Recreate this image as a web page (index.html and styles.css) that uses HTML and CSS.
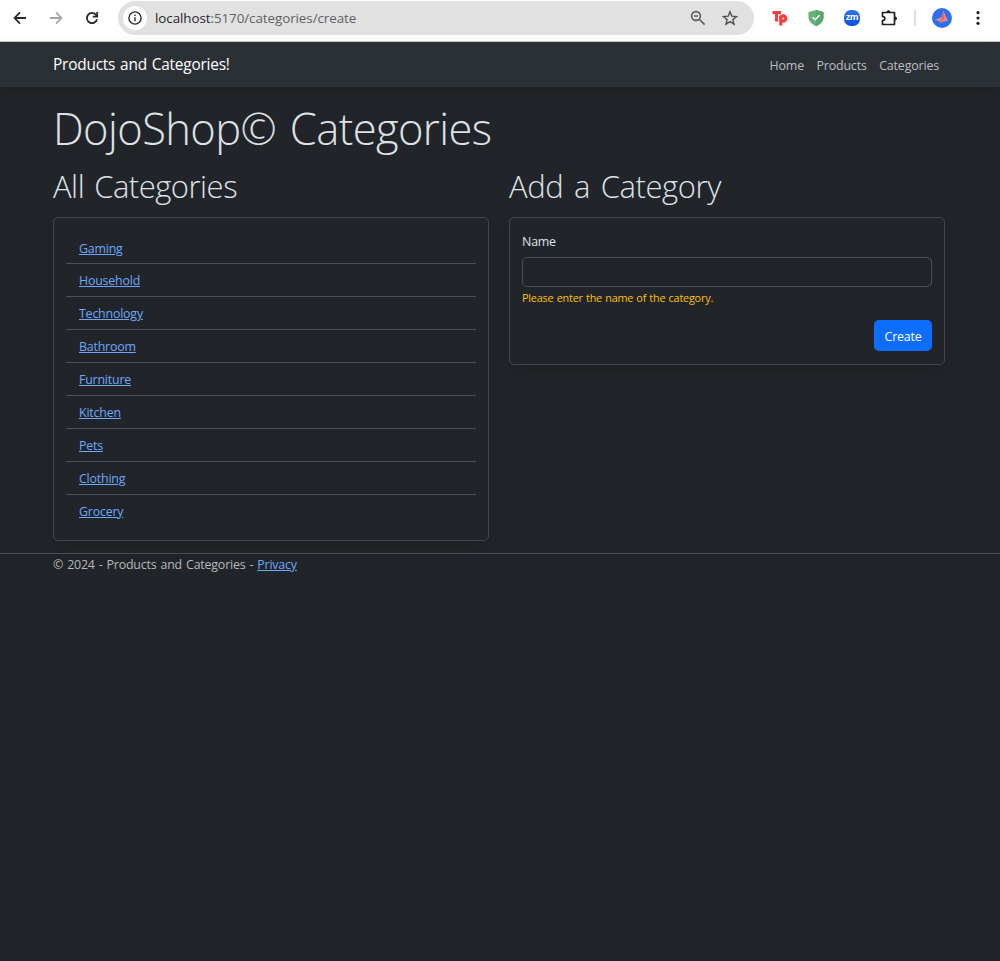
FILE: index.html
```html
<!DOCTYPE html>
<html lang="en">
<head>
<meta charset="utf-8">
<title>Products and Categories</title>
<link rel="stylesheet" href="styles.css">
</head>
<body>
<div class="toolbar">
  <svg class="ico back" width="16" height="16" viewBox="0 0 16 16" fill="none" stroke="#28292c" stroke-width="1.8"><path d="M14 8H3M8 2.4 2.6 8 8 13.6"/></svg>
  <svg class="ico forward" width="16" height="16" viewBox="0 0 16 16" fill="none" stroke="#a5a5a6" stroke-width="1.8"><path d="M2 8h11M8 2.4 13.4 8 8 13.6"/></svg>
  <svg class="ico reload" width="16" height="16" viewBox="0 0 16 16" fill="none" stroke="#28292c" stroke-width="1.8"><path d="M13 9.2A5.1 5.1 0 1 1 12 4.8L13.2 6.2"/><path d="M13.2 2v4.6H8.8"/></svg>
  <div class="address">
    <span class="info"><svg width="16" height="16" viewBox="0 0 16 16" fill="none" stroke="#2b2c2f" stroke-width="1.4"><circle cx="8" cy="8" r="6.1"/><path d="M8 7.2v4M8 4.6v1.5"/></svg></span>
    <span class="url"><span class="host">localhost</span>:5170/categories/create</span>
    <svg class="magnify" width="16" height="16" viewBox="0 0 16 16" fill="none" stroke="#5c5d60" stroke-width="1.6"><circle cx="6" cy="6" r="4.4"/><path d="M9.3 9.3 14.6 14.6M4 6h4"/></svg>
    <svg class="star" width="16" height="16" viewBox="0 0 16 16" fill="none" stroke="#505154" stroke-width="1.4"><path d="m8 1.8 1.8 4.3 4.7.4-3.6 3.1 1.1 4.6L8 11.7l-4 2.5 1.1-4.6-3.6-3.1 4.7-.4z"/></svg>
  </div>
  <svg class="ico tp" width="18" height="18" viewBox="0 0 18 18" fill="none" stroke="#fa3c3c" stroke-width="3.1"><path d="M1.6 3.6H10M5.5 3v9.500M9.800 6.500v10"/><circle cx="12.200" cy="9.500" r="2.600"/></svg>
  <svg class="ico shield" width="16" height="18" viewBox="0 0 16 18"><path d="M8 1 15.500 3v5.200c0 4-3 7-7.500 9.100C3.500 15.200.5 12.200.5 8.200V3z" fill="#67b279"/><path d="M8 1 15.500 3v5.200c0 4-3 7-7.500 9.100z" fill="#58a86a"/><path d="m4.600 8.300 2.600 2.500 4.400-4.600" fill="none" stroke="#fff" stroke-width="1.500"/></svg>
  <span class="ico zm">zm</span>
  <svg class="ico puzzle" width="18" height="18" viewBox="0 0 18 18"><path d="M2.500 3.500h12v12h-12v-3.800q2.400-.5 2.400-2.200t-2.400-2.200z" fill="none" stroke="#202124" stroke-width="1.700" stroke-linejoin="round"/><path d="M6.500 3.200a2 2 0 0 1 4 0zM15 7.500a2 2 0 0 1 0 4z" fill="#202124"/></svg>
  <span class="divider"></span>
  <svg class="ico avatar" width="20" height="20" viewBox="0 0 20 20"><circle cx="10" cy="10" r="10" fill="#2e6ff0"/><path d="M11.500 2.800 15.800 13 11.500 13.200 8 15.300 8.200 13.500 3.300 11.800 9.200 9.600z" fill="#f58a7a"/><path d="M11.500 2.800 12.500 10.500 8 15.300 9.500 10z" fill="#e0666a"/></svg>
  <svg class="ico dots" width="4" height="16" viewBox="0 0 4 16" fill="#202124"><circle cx="2" cy="2.700" r="1.600"/><circle cx="2" cy="8" r="1.600"/><circle cx="2" cy="13.300" r="1.600"/></svg>
</div>
<header class="navbar">
  <a class="brand">Products and Categories!</a>
  <nav class="links"><a>Home</a><a>Products</a><a>Categories</a></nav>
</header>
<main class="container">
  <h1>DojoShop© Categories</h1>
  <div class="row">
    <section>
      <h2 class="h-all">All Categories</h2>
      <div class="card">
        <ul class="list">
          <li><a href="#">Gaming</a></li>
          <li><a href="#">Household</a></li>
          <li><a href="#">Technology</a></li>
          <li><a href="#">Bathroom</a></li>
          <li><a href="#">Furniture</a></li>
          <li><a href="#">Kitchen</a></li>
          <li><a href="#">Pets</a></li>
          <li><a href="#">Clothing</a></li>
          <li><a href="#">Grocery</a></li>
        </ul>
      </div>
    </section>
    <section>
      <h2 class="h-add">Add a Category</h2>
      <form class="card form">
        <label for="name">Name</label>
        <input id="name" type="text">
        <div class="error">Please enter the name of the category.</div>
        <button type="button">Create</button>
      </form>
    </section>
  </div>
</main>
<footer class="footer"><span>© 2024 - Products and Categories - </span><a href="#">Privacy</a></footer>
</body>
</html>
```
FILE: styles.css
```css
* { box-sizing: border-box; }
body { margin: 0; height: 961px; overflow: hidden; background: #212529; color: #dee2e6; font: 12.4px/19px "Open Sans", "Noto Sans", sans-serif; letter-spacing: -0.2px; }
svg { display: block; flex: none; }
a { color: #6ea8fe; }

.toolbar { display: flex; align-items: center; height: 42px; padding: 0 0 6px 12px; background: #fff; border-bottom: 1px solid #c7c9c8; }
.ico { flex: none; }
.forward, .reload { margin-left: 20px; }
.address { display: flex; align-items: center; width: 636px; height: 34px; margin-left: 18px; padding: 0 16px 0 5px; border-radius: 17px; background: #e1e1e1; }
.info { display: flex; align-items: center; justify-content: center; width: 24px; height: 24px; border-radius: 50%; background: #fff; }
.url { flex: 1; margin-left: 8px; padding-top: 1px; font-size: 13.4px; letter-spacing: -0.07px; color: #5f6064; white-space: nowrap; }
.host { color: #27282b; }
.star { margin-left: 16px; }
.tp { margin-left: 17px; }
.shield { margin-left: 19px; }
.zm { width: 16px; height: 16px; margin-left: 20px; border-radius: 7px; background: linear-gradient(#2b74f5, #0b4fe0); color: #fff; font-size: 9px; font-weight: 700; line-height: 14px; text-align: center; letter-spacing: -0.3px; }
.puzzle { margin-left: 20px; }
.divider { width: 2px; height: 16px; margin-left: 16px; background: #f6cfe0; }
.avatar { margin-left: 16px; }
.dots { margin-left: 24px; }

.navbar { display: flex; align-items: center; justify-content: space-between; height: 45px; padding: 0 61px 0 53px; background: #2b3035; box-shadow: 0 6px 13px rgba(0,0,0,.15); }
.brand { padding-bottom: 1px; color: #fff; font-size: 15.4px; letter-spacing: -0.2px; word-spacing: 1px; }
.links { display: flex; gap: 12.5px; padding-top: 1px; letter-spacing: -0.15px; }
.links a { color: #bdbfc1; }

.container { padding: 0 55px 0 53px; }
h1, h2 { margin: 0; font-weight: 300; }
h1 { padding-top: 15px; font-size: 43.5px; line-height: 54px; letter-spacing: -0.6px; word-spacing: 3px; }
.row { display: grid; grid-template-columns: 1fr 1fr; gap: 20px; margin-top: 11px; align-items: start; }
h2 { height: 50px; font-size: 31px; line-height: 38px; letter-spacing: -0.5px; word-spacing: 2.5px; white-space: nowrap; }
.h-add { letter-spacing: -0.4px; word-spacing: 3px; }
.card { border: 1px solid #43474b; border-radius: 5px; box-shadow: 0 6px 13px rgba(0,0,0,.15); }
.list { margin: 0; padding: 13px 12px 12px; list-style: none; }
.list li { height: 33px; padding: 7px 13px 6px; border-bottom: 1px solid #4d5154; }
.list li:first-child { padding: 8px 13px 5px; }
.list li:last-child { border-bottom: 0; }
.form { display: flex; flex-direction: column; height: 148px; padding: 14px 12px 13px; }
.form input { height: 30px; margin-top: 6px; border: 1px solid #495057; border-radius: 5px; background: #212529; }
.error { margin-top: 2px; font-size: 10.8px; line-height: 18px; letter-spacing: -0.18px; word-spacing: 0.6px; color: #ffc107; }
.form button { align-self: flex-end; width: 58px; height: 31px; margin-top: 13px; padding: 2px 0 0; border: 0; border-radius: 5px; background: #0d6efd; color: #fff; font: inherit; letter-spacing: inherit; }
.footer { margin-top: 12px; padding: 1px 53px; border-top: 1px solid #4d5154; color: #b5b9bc; letter-spacing: -0.19px; word-spacing: 1px; white-space: pre; }
```
